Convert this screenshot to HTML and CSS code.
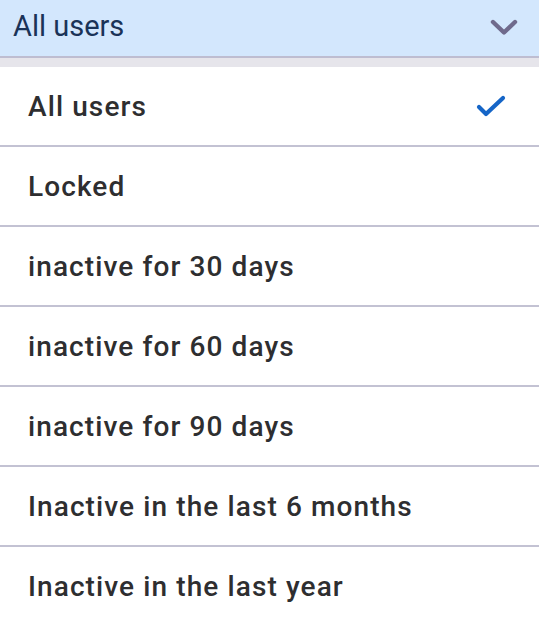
FILE: index.html
```html
<!DOCTYPE html>
<html lang="en">
<head>
  <meta charset="UTF-8">
  <title>User filter</title>
  <link rel="stylesheet" href="styles.css">
</head>
<body>
  <div class="filter">
    <!-- Selected value -->
    <button class="filter-toggle">
      <span class="filter-value">All users</span>
      <svg class="chevron" viewBox="0 0 28 18">
        <path d="M3 3L14 13.5L25 3" fill="none" stroke="#6f6a8c" stroke-width="4.4" stroke-linecap="round" stroke-linejoin="round"></path>
      </svg>
    </button>

    <!-- Options -->
    <ul class="filter-menu">
      <li class="filter-option selected">
        All users
        <svg class="check" viewBox="0 0 30 24">
          <path d="M3 13L10 20L27 4" fill="none" stroke="#1565c7" stroke-width="4.2" stroke-linecap="round" stroke-linejoin="round"></path>
        </svg>
      </li>
      <li class="filter-option">Locked</li>
      <li class="filter-option">inactive for 30 days</li>
      <li class="filter-option">inactive for 60 days</li>
      <li class="filter-option">inactive for 90 days</li>
      <li class="filter-option">Inactive in the last 6 months</li>
      <li class="filter-option">Inactive in the last year</li>
    </ul>
  </div>
</body>
</html>
```

FILE: styles.css
```css
/* Base */
body {
  margin: 0;
  background: #fff;
  font-family: Roboto, "Liberation Sans", sans-serif;
}

.filter {
  width: 100%;
}

/* Toggle */
.filter-toggle {
  display: flex;
  align-items: center;
  justify-content: space-between;
  width: 100%;
  height: 58px;
  margin: 0;
  padding: 0 21px 0 13px;
  background: #d3e7fd;
  border: none;
  border-bottom: 2px solid #bebdd1;
  font-family: inherit;
  font-size: 29px;
  color: #1a3358;
  box-sizing: border-box;
}

.filter-value {
  padding-bottom: 4px;
}

.chevron {
  width: 28px;
  height: 18px;
}

/* Menu */
.filter-menu {
  list-style: none;
  margin: 0;
  padding: 0;
  border-top: 9px solid #e6e5eb;
}

.filter-option {
  display: flex;
  align-items: center;
  justify-content: space-between;
  height: 80px;
  padding: 0 33px 0 28px;
  border-bottom: 2px solid #c3c2d3;
  font-size: 28px;
  font-weight: 500;
  letter-spacing: 1.1px;
  color: #2e2e30;
  box-sizing: border-box;
}

.check {
  width: 30px;
  height: 24px;
}
```
